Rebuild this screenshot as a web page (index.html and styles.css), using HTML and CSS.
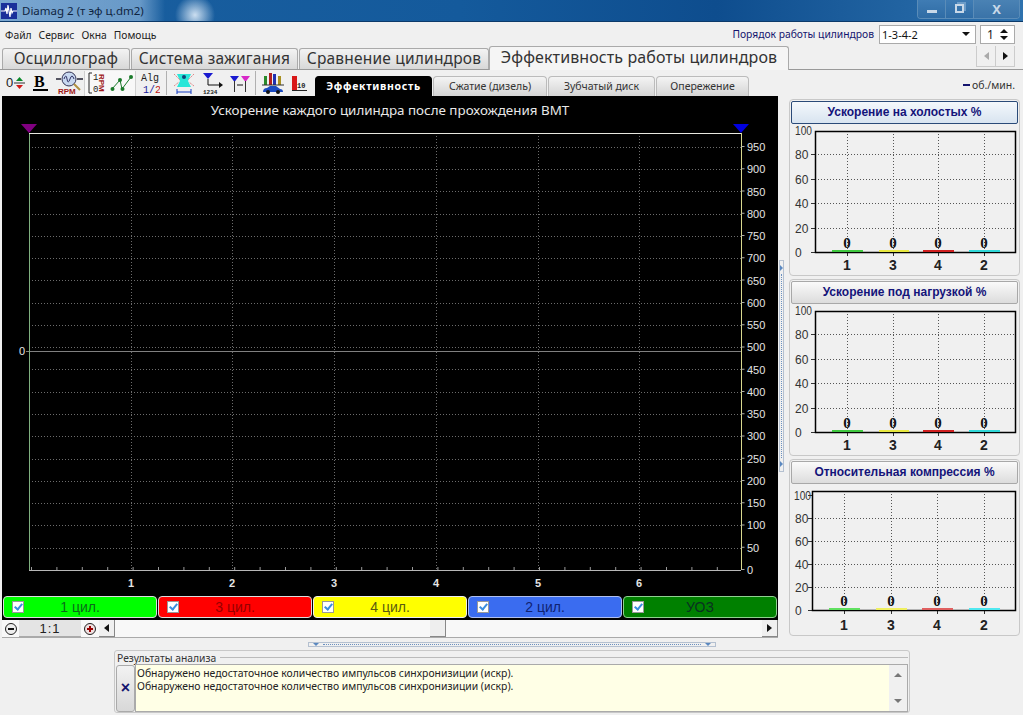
FILE: index.html
```html
<!DOCTYPE html>
<html lang="ru">
<head>
  <meta charset="UTF-8">
  <title>Diamag 2</title>
  <link rel="stylesheet" href="styles.css">
</head>
<body>
  <header class="titlebar">
    <svg class="app-icon" width="16" height="16" viewBox="0 0 16 16">
      <rect width="16" height="16" fill="#1a2f9a"/>
      <path d="M0 8H4L5 5L6 11L7 2L9 14L10 5L11 10L12 8H16" fill="none" stroke="#fff" stroke-width="1.2"/>
    </svg>
    <span class="title-text">Diamag 2 (т эф ц.dm2)</span>
    <div class="win-buttons">
      <div class="win-btn min"><span class="min-bar"></span></div>
      <div class="win-btn max"><span class="max-box"></span></div>
      <div class="win-btn close">X</div>
    </div>
  </header>

  <div class="menubar">
    <nav class="menu">
      <a>Файл</a><a>Сервис</a><a>Окна</a><a>Помощь</a>
    </nav>
    <div class="order">
      <span class="order-label">Порядок работы цилиндров</span>
      <div class="combo"><span>1-3-4-2</span><i class="arrow-down"></i></div>
      <div class="spin"><span>1</span><div class="spin-arrows"><i class="arrow-up"></i><i class="arrow-down"></i></div></div>
    </div>
  </div>

  <div class="tabs">
    <div class="tab tab-1">Осциллограф</div>
    <div class="tab tab-2">Система зажигания</div>
    <div class="tab tab-3">Сравнение цилиндров</div>
    <div class="tab tab-active">Эффективность работы цилиндров</div>
    <div class="tab-scroll">
      <div class="tab-scroll-btn"><i class="arrow-left dim"></i></div>
      <div class="tab-scroll-btn"><i class="arrow-right"></i></div>
    </div>
  </div>

  <div class="toolbar">
    <div class="tool-group">
      <svg width="22" height="22" viewBox="0 0 22 22">
        <text x="2" y="15" class="ico-txt">0</text>
        <path d="M10 11H21" stroke="#333"/>
        <path d="M15.500 5L12 9H19Z" fill="#0a8a2a"/>
        <path d="M15.500 17L12 13H19Z" fill="#d01818"/>
      </svg>
      <svg width="22" height="22" viewBox="0 0 22 22">
        <text x="4" y="15" class="ico-b">B</text>
        <rect x="3" y="17" width="15" height="2" fill="#000"/>
      </svg>
      <svg width="28" height="24" viewBox="0 0 28 24">
        <path d="M0 8H5M21 8H27" stroke="#223" stroke-width="1.500"/>
        <circle cx="13" cy="8" r="7" fill="#c8d8f0" stroke="#335"/>
        <path d="M8 8Q10 2 11 8T14 8T18 8" fill="none" stroke="#336"/>
        <path d="M18 13L24 19" stroke="#b09040" stroke-width="2"/>
        <text x="2" y="23" class="ico-rpm">RPM</text>
      </svg>
    </div>
    <div class="tool-group pressed">
      <svg width="20" height="24" viewBox="0 0 20 24">
        <path d="M5 2H2V22H5" fill="none" stroke="#222"/>
        <text x="6" y="9" class="ico-sm">1</text>
        <text x="6" y="21" class="ico-sm">0</text>
        <text class="ico-rpm" transform="translate(12 3) rotate(90)">RPM</text>
      </svg>
      <svg width="24" height="22" viewBox="0 0 24 22">
        <path d="M2 17L10 8L12 17L21 5" fill="none" stroke="#1a7a2a"/>
        <circle cx="2.500" cy="17" r="2" fill="#1a7a2a"/>
        <circle cx="10" cy="8" r="2" fill="#1a7a2a"/>
        <circle cx="12.500" cy="17" r="2" fill="#1a7a2a"/>
        <circle cx="21" cy="5" r="2" fill="#1a7a2a"/>
      </svg>
    </div>
    <svg class="ml-4" width="20" height="24" viewBox="0 0 20 24">
      <text x="1" y="10" class="ico-alg">Alg</text>
      <text x="3" y="22" class="ico-alg blue">1/<tspan fill="#c01818">2</tspan></text>
    </svg>
    <span class="tool-sep ml-6"></span>
    <svg class="ml-6" width="22" height="24" viewBox="0 0 22 24">
      <path d="M4 3H18L15 10L18 16H4L7 10Z" fill="#29e6d8"/>
      <path d="M1 3L7 9M21 3L15 9M1 15L6 11M21 15L16 11" stroke="#d88" stroke-dasharray="2 1"/>
      <circle cx="11" cy="6" r="2" fill="#147"/>
      <path d="M4 21H18M4 18V23M18 18V23" stroke="#123ac0"/>
    </svg>
    <svg class="ml-7" width="22" height="24" viewBox="0 0 22 24">
      <path d="M1 2H11L6 8Z" fill="#1a1ad0"/>
      <path d="M6 8V14H18" fill="none" stroke="#111"/>
      <path d="M17 11L21 14L17 17Z" fill="#111"/>
      <text x="1" y="23" class="ico-num">1234</text>
    </svg>
    <svg class="ml-5" width="22" height="24" viewBox="0 0 22 24">
      <path d="M1 5H10L5.500 11Z" fill="#1a1ad0"/>
      <path d="M12 5H21L16.500 11Z" fill="#d828c8"/>
      <path d="M5.500 10V21M16.500 10V21" stroke="#333"/>
      <path d="M8 14H14" stroke="#111"/>
    </svg>
    <span class="tool-sep ml-4"></span>
    <svg class="ml-4" width="25" height="24" viewBox="0 0 25 24">
      <rect x="4" y="5" width="3" height="9" fill="#2a8a2a"/>
      <rect x="9" y="2" width="3" height="12" fill="#b02020"/>
      <rect x="13" y="3" width="3" height="11" fill="#2030b0"/>
      <rect x="18" y="5" width="3" height="9" fill="#a89020"/>
      <path d="M2 14H24" stroke="#333"/>
      <path d="M3 21Q3 17 7 17L10 15H16L20 18Q23 18 23 21Z" fill="#1a4ac0"/>
      <circle cx="8" cy="21" r="2" fill="#111"/>
      <circle cx="18" cy="21" r="2" fill="#111"/>
    </svg>
    <svg class="ml-5" width="18" height="22" viewBox="0 0 18 22">
      <rect x="2" y="4" width="5" height="14" fill="#d81818"/>
      <text x="7" y="16" class="ico-ten">10</text>
      <path d="M2 18.500H17" stroke="#222"/>
    </svg>

    <div class="subtabs">
      <div class="subtab subtab-active">Эффективность</div>
      <div class="subtab subtab-2">Сжатие (дизель)</div>
      <div class="subtab subtab-3">Зубчатый диск</div>
      <div class="subtab subtab-4">Опережение</div>
    </div>
    <div class="rpm-legend"><i class="rpm-dash"></i>об./мин.</div>
  </div>

  <main class="workspace">
    <div class="left-col">
      <section class="scope">
        <svg class="scope-chart" width="776" height="498" viewBox="2 96 776 498">
          <text x="390" y="115" class="scope-title">Ускорение каждого цилиндра после прохождения ВМТ</text>
          <path d="M21 124H37L29 133Z" fill="#800080"/>
          <path d="M733 124H749L741 133Z" fill="#0000e0"/>

          <path class="grid" d="M131.500 133V570M232.500 133V570M334.500 133V570M436.500 133V570M538.500 133V570M639.500 133V570"/>
          <path class="grid" d="M29 147.500H741M29 169.500H741M29 191.500H741M29 214.500H741M29 236.500H741M29 258.500H741M29 280.500H741M29 303.500H741M29 325.500H741M29 347.500H741M29 369.500H741M29 392.500H741M29 414.500H741M29 436.500H741M29 459.500H741M29 481.500H741M29 503.500H741M29 525.500H741M29 548.500H741"/>
          <path d="M26 351.500H741" stroke="#808080"/>

          <path d="M29.500 133V570" stroke="#7fb07f"/>
          <path d="M29 133.500H741" stroke="#e8e8e0"/>
          <path d="M29 570.500H741" stroke="#b8b8b8"/>
          <path d="M741.500 133V570" stroke="#d8d890"/>
          <path d="M30 568.500H741" stroke="#999" stroke-width="3" stroke-dasharray="1 24.400" stroke-dashoffset="-1"/>
          <path d="M743 570V133" stroke="#aaa" stroke-width="3" stroke-dasharray="1 21.260"/>

          <text x="22" y="355" class="axis axis-left">0</text>
          <g class="axis axis-right">
            <text x="747" y="151">950</text>
            <text x="747" y="173">900</text>
            <text x="747" y="196">850</text>
            <text x="747" y="218">800</text>
            <text x="747" y="240">750</text>
            <text x="747" y="262">700</text>
            <text x="747" y="285">650</text>
            <text x="747" y="307">600</text>
            <text x="747" y="329">550</text>
            <text x="747" y="351">500</text>
            <text x="747" y="374">450</text>
            <text x="747" y="396">400</text>
            <text x="747" y="418">350</text>
            <text x="747" y="440">300</text>
            <text x="747" y="463">250</text>
            <text x="747" y="485">200</text>
            <text x="747" y="507">150</text>
            <text x="747" y="529">100</text>
            <text x="747" y="552">50</text>
            <text x="747" y="574">0</text>
          </g>
          <g class="axis axis-x">
            <text x="131" y="587">1</text>
            <text x="232" y="587">2</text>
            <text x="334" y="587">3</text>
            <text x="436" y="587">4</text>
            <text x="538" y="587">5</text>
            <text x="639" y="587">6</text>
          </g>
        </svg>
        <div class="legend">
          <div class="cyl cyl-green"><span class="check"></span><span class="cyl-name">1 цил.</span></div>
          <div class="cyl cyl-red"><span class="check"></span><span class="cyl-name">3 цил.</span></div>
          <div class="cyl cyl-yellow"><span class="check"></span><span class="cyl-name">4 цил.</span></div>
          <div class="cyl cyl-blue"><span class="check"></span><span class="cyl-name">2 цил.</span></div>
          <div class="cyl cyl-dark"><span class="check"></span><span class="cyl-name">УОЗ</span></div>
        </div>
      </section>

      <div class="scrollrow">
        <div class="zoom-btn minus"><span></span></div>
        <div class="zoom-value">1:1</div>
        <div class="zoom-btn plus"><span></span></div>
        <div class="scroll-btn"><i class="arrow-left"></i></div>
        <div class="scroll-track"><div class="scroll-thumb"></div></div>
        <div class="scroll-btn"><i class="arrow-right"></i></div>
      </div>

      <div class="hsplit"><i class="tiny-down"></i><span class="dots"></span><i class="tiny-down"></i></div>

      <section class="results">
        <div class="results-head"><span>Результаты анализа</span><span class="results-line"></span></div>
        <div class="results-body">
          <button class="results-close">×</button>
          <div class="results-text">
            <div class="results-lines">
              <p>Обнаружено недостаточное количество импульсов синхронизиции (искр).</p>
              <p>Обнаружено недостаточное количество импульсов синхронизиции (искр).</p>
            </div>
            <div class="results-scroll"><i class="arrow-up grey"></i><i class="arrow-down grey"></i></div>
          </div>
        </div>
      </section>
    </div>

    <div class="vsplit"><i class="tiny-right"></i><span class="vdots"></span><i class="tiny-right"></i></div>

    <aside class="right-col">
      <section class="panel">
        <div class="panel-head head-focus">Ускорение на холостых %</div>
        <svg class="mini" width="231" height="153" viewBox="789 122 231 153">
          <path class="mini-grid" d="M847.500 131V252M893.500 131V252M938.500 131V252M984.500 131V252M815 154.500H1016M815 179.500H1016M815 203.500H1016M815 228.500H1016"/>
          <path class="mini-ticks" d="M811 154.500H815M811 179.500H815M811 203.500H815M811 228.500H815M811 252.500H815M847.500 252V256M893.500 252V256M938.500 252V256M984.500 252V256"/>
          <rect x="815.500" y="131.500" width="200" height="121" class="mini-frame"/>
          <g class="mini-y">
            <text x="795" y="135" textLength="17" lengthAdjust="spacingAndGlyphs">100</text><text x="795" y="159">80</text><text x="795" y="184">60</text>
            <text x="795" y="208">40</text><text x="795" y="233">20</text><text x="795" y="257">0</text>
          </g>
          <path d="M832 251H863" stroke="#40c840" stroke-width="2"/>
          <path d="M879 251H909" stroke="#e8e840" stroke-width="2"/>
          <path d="M923 251H954" stroke="#d02020" stroke-width="2"/>
          <path d="M969 251H1000" stroke="#30d8d8" stroke-width="2"/>
          <g class="mini-val">
            <text x="847" y="248">0</text><text x="893" y="248">0</text><text x="938" y="248">0</text><text x="984" y="248">0</text>
          </g>
          <g class="mini-x">
            <text x="847" y="270">1</text><text x="893" y="270">3</text><text x="938" y="270">4</text><text x="984" y="270">2</text>
          </g>
        </svg>
      </section>
      <section class="panel">
        <div class="panel-head">Ускорение под нагрузкой %</div>
        <svg class="mini" width="231" height="153" viewBox="789 122 231 153">
          <path class="mini-grid" d="M847.500 131V252M893.500 131V252M938.500 131V252M984.500 131V252M815 154.500H1016M815 179.500H1016M815 203.500H1016M815 228.500H1016"/>
          <path class="mini-ticks" d="M811 154.500H815M811 179.500H815M811 203.500H815M811 228.500H815M811 252.500H815M847.500 252V256M893.500 252V256M938.500 252V256M984.500 252V256"/>
          <rect x="815.500" y="131.500" width="200" height="121" class="mini-frame"/>
          <g class="mini-y">
            <text x="795" y="135" textLength="17" lengthAdjust="spacingAndGlyphs">100</text><text x="795" y="159">80</text><text x="795" y="184">60</text>
            <text x="795" y="208">40</text><text x="795" y="233">20</text><text x="795" y="257">0</text>
          </g>
          <path d="M832 251H863" stroke="#40c840" stroke-width="2"/>
          <path d="M879 251H909" stroke="#e8e840" stroke-width="2"/>
          <path d="M923 251H954" stroke="#d02020" stroke-width="2"/>
          <path d="M969 251H1000" stroke="#30d8d8" stroke-width="2"/>
          <g class="mini-val">
            <text x="847" y="248">0</text><text x="893" y="248">0</text><text x="938" y="248">0</text><text x="984" y="248">0</text>
          </g>
          <g class="mini-x">
            <text x="847" y="270">1</text><text x="893" y="270">3</text><text x="938" y="270">4</text><text x="984" y="270">2</text>
          </g>
        </svg>
      </section>
      <section class="panel">
        <div class="panel-head">Относительная компрессия %</div>
        <svg class="mini" width="231" height="153" viewBox="789 482 231 153">
          <path class="mini-grid" d="M844.500 491V610M891.500 491V610M937.500 491V610M984.500 491V610M812 518.500H1016M812 541.500H1016M812 564.500H1016M812 587.500H1016"/>
          <path class="mini-ticks" d="M808 495.500H812M808 518.500H812M808 541.500H812M808 564.500H812M808 587.500H812M808 610.500H812M844.500 610V614M891.500 610V614M937.500 610V614M984.500 610V614"/>
          <rect x="812.500" y="491.500" width="203" height="119" class="mini-frame"/>
          <g class="mini-y">
            <text x="794" y="500" textLength="17" lengthAdjust="spacingAndGlyphs">100</text><text x="795" y="523">80</text><text x="795" y="546">60</text>
            <text x="795" y="569">40</text><text x="795" y="592">20</text><text x="795" y="615">0</text>
          </g>
          <path d="M829 609H860" stroke="#60e060" stroke-width="2"/>
          <path d="M876 609H907" stroke="#f0f060" stroke-width="2"/>
          <path d="M922 609H953" stroke="#e06060" stroke-width="2"/>
          <path d="M969 609H1000" stroke="#50e8f0" stroke-width="2"/>
          <g class="mini-val">
            <text x="844" y="606">0</text><text x="891" y="606">0</text><text x="937" y="606">0</text><text x="984" y="606">0</text>
          </g>
          <g class="mini-x">
            <text x="844" y="630">1</text><text x="891" y="630">3</text><text x="937" y="630">4</text><text x="984" y="630">2</text>
          </g>
        </svg>
      </section>
    </aside>
  </main>
</body>
</html>
```

FILE: styles.css
```css
/* General */
html, body {
  margin: 0;
  height: 715px;
  overflow: hidden;
}

body {
  width: 1023px;
  background: #f0f0f0;
  color: #222;
  font-family: "Noto Sans", "Liberation Sans", sans-serif;
  font-size: 11px;
}

p {
  margin: 0;
}

/* Little arrows */
.arrow-down, .arrow-up, .arrow-left, .arrow-right {
  display: block;
  width: 0;
  height: 0;
  border-style: solid;
  border-color: transparent;
}

.arrow-down {
  border-width: 4px 4px 0;
  border-top-color: #111;
}

.arrow-up {
  border-width: 0 4px 4px;
  border-bottom-color: #111;
}

.arrow-left {
  border-width: 4px 5px 4px 0;
  border-right-color: #111;
}

.arrow-right {
  border-width: 4px 0 4px 5px;
  border-left-color: #111;
}

.arrow-left.dim {
  border-right-color: #aaa;
}

.arrow-up.grey {
  border-bottom-color: #777;
}

.arrow-down.grey {
  border-top-color: #777;
}

/* Title bar */
.titlebar {
  height: 21px;
  display: flex;
  align-items: center;
  padding-left: 1px;
  gap: 5px;
  background:
    radial-gradient(circle 20px at 195px 15px, rgba(235, 245, 255, 0.85), rgba(235, 245, 255, 0) 100%),
    linear-gradient(90deg, rgba(200, 225, 250, 0.55) 0, rgba(200, 225, 250, 0.45) 140px, rgba(200, 225, 250, 0) 165px),
    linear-gradient(90deg, #1a5f9f 0, #145a9c 45%, #0e4d8e 70%, #2e72ae 100%);
  border-bottom: 1px solid #0c3a6a;
}

.app-icon {
  flex: none;
}

.title-text {
  font-size: 11.5px;
  color: #10253f;
}

.win-buttons {
  margin-left: auto;
  margin-right: 3px;
  margin-bottom: 3px;
  display: flex;
  height: 18px;
  border: 1px solid #5a8cb8;
  border-top: none;
  border-radius: 0 0 4px 4px;
  overflow: hidden;
}

.win-btn {
  height: 18px;
  display: flex;
  align-items: center;
  justify-content: center;
  background: linear-gradient(#3f7cb4, #2f6ca5);
  color: #c8d8e8;
  font-weight: 700;
  font-size: 13px;
}

.win-btn.min, .win-btn.max {
  width: 27px;
  border-right: 1px solid #5a8cb8;
}

.win-btn.close {
  width: 45px;
  background: linear-gradient(#4a82b4, #3a73a8);
}

.min-bar {
  width: 10px;
  height: 3px;
  margin-top: 5px;
  background: #c8d8e8;
}

.max-box {
  width: 5px;
  height: 5px;
  border: 2px solid #c8d8e8;
  box-shadow: 2px -2px 0 0 #6c9cc8;
}

/* Menu bar */
.menubar {
  height: 24px;
  display: flex;
  align-items: center;
  justify-content: space-between;
  padding-right: 8px;
}

.menu {
  display: flex;
  gap: 7px;
  padding-left: 5px;
  font-size: 10.3px;
  margin-top: 1px;
}

.order {
  display: flex;
  align-items: center;
}

.order-label {
  color: #14146e;
  margin-right: 5px;
  font-size: 10.3px;
}

.combo {
  width: 97px;
  height: 19px;
  box-sizing: border-box;
  background: #fff;
  border: 1px solid #aaa;
  display: flex;
  align-items: center;
  justify-content: space-between;
  padding: 0 5px 0 2px;
  margin-right: 4px;
  color: #111;
}

.spin {
  width: 35px;
  height: 19px;
  box-sizing: border-box;
  background: #fff;
  border: 1px solid #aaa;
  display: flex;
  align-items: center;
  justify-content: space-between;
  padding: 0 6px;
  font-size: 12px;
}

.spin-arrows {
  display: flex;
  flex-direction: column;
  gap: 3px;
}

/* Main tabs */
.tabs {
  height: 23px;
  display: flex;
  align-items: flex-end;
  padding-left: 2px;
  border-bottom: 1px solid #999;
  position: relative;
}

.tab {
  box-sizing: border-box;
  height: 21px;
  display: flex;
  align-items: center;
  justify-content: center;
  padding-bottom: 2px;
  border: 1px solid #aaa;
  border-bottom: none;
  border-radius: 3px 3px 0 0;
  margin-right: 1px;
  background: linear-gradient(#f3f3f3, #d8d8d8);
  font-size: 15.5px;
  letter-spacing: 0.2px;
  color: #333;
}

.tab-1 {
  width: 128px;
}

.tab-2 {
  width: 167px;
}

.tab-3 {
  width: 190px;
}

.tab-active {
  width: 300px;
  height: 24px;
  margin: 0 0 -1px -1px;
  padding-bottom: 3px;
  background: #f5f5f5;
  font-size: 16px;
  letter-spacing: 0.1px;
}

.tab-scroll {
  position: absolute;
  right: 8px;
  bottom: 2px;
  display: flex;
  height: 20px;
  border: 1px solid #ccc;
  border-top: none;
}

.tab-scroll-btn {
  width: 18px;
  display: flex;
  align-items: center;
  justify-content: center;
  border-left: 1px solid #ccc;
}

.tab-scroll-btn:first-child {
  border-left: none;
}

/* Toolbar */
.toolbar {
  height: 26px;
  display: flex;
  align-items: center;
  padding-left: 4px;
  position: relative;
}

.toolbar svg {
  flex: none;
}

.ml-4 {
  margin-left: 4px;
}

.ml-5 {
  margin-left: 5px;
}

.ml-6 {
  margin-left: 6px;
}

.ml-7 {
  margin-left: 7px;
}

.tool-group {
  display: flex;
  align-items: center;
  gap: 4px;
  height: 25px;
}

.tool-group.pressed {
  gap: 3px;
  padding: 0 1px 0 2px;
  background: #f8f8f8;
  border-left: 1px solid #d0d0d0;
  border-right: 1px solid #d0d0d0;
}

.tool-sep {
  width: 1px;
  height: 24px;
  flex: none;
  background: #b0b0b0;
}

.ico-txt {
  font: 13px "Liberation Sans", sans-serif;
  fill: #222;
}

.ico-b {
  font: 700 16px "Liberation Serif", serif;
  fill: #000;
}

.ico-rpm {
  font: 700 8px "Liberation Sans", sans-serif;
  fill: #a01818;
}

.ico-sm {
  font: 9px "Liberation Mono", monospace;
  fill: #222;
}

.ico-alg {
  font: 10px "Liberation Mono", monospace;
  fill: #222;
}

.ico-alg.blue {
  fill: #1a1a9a;
}

.ico-num {
  font: 700 6px "Liberation Mono", monospace;
  fill: #222;
}

.ico-ten {
  font: 700 7px "Liberation Mono", monospace;
  fill: #222;
}

.subtabs {
  position: absolute;
  left: 315px;
  bottom: 0;
  display: flex;
  align-items: flex-end;
  height: 21px;
}

.subtab {
  box-sizing: border-box;
  height: 20px;
  display: flex;
  align-items: center;
  justify-content: center;
  padding-bottom: 2px;
  border: 1px solid #bbb;
  border-bottom: none;
  border-radius: 4px 4px 0 0;
  margin-right: 1px;
  background: linear-gradient(#f4f4f4, #d4d4d4);
  font-size: 10.5px;
  color: #333;
}

.subtab-active {
  width: 117px;
  background: #000;
  border-color: #000;
  color: #fff;
  font-weight: 700;
  letter-spacing: 0.7px;
}

.subtab-2 {
  width: 114px;
}

.subtab-3 {
  width: 107px;
}

.subtab-4 {
  width: 93px;
}

.rpm-legend {
  position: absolute;
  right: 8px;
  bottom: 4px;
  display: flex;
  align-items: center;
  gap: 2px;
  font-size: 10.5px;
  color: #333;
}

.rpm-dash {
  width: 7px;
  height: 2px;
  background: #14146e;
}

/* Layout below the toolbar */
.workspace {
  height: 620px;
  display: flex;
}

.left-col {
  width: 776px;
  margin-left: 2px;
  display: flex;
  flex-direction: column;
}

/* Oscilloscope */
.scope {
  background: #000;
  height: 524px;
  display: flex;
  flex-direction: column;
}

.scope-chart {
  display: block;
  flex: none;
}

.scope-title {
  font: 13.4px "Noto Sans", sans-serif;
  fill: #e8e8e8;
  text-anchor: middle;
}

.grid {
  fill: none;
  stroke: #6c6c6c;
  stroke-dasharray: 1 2;
}

.axis {
  font: 11px "Liberation Sans", sans-serif;
  fill: #e4e4e4;
}

.axis-left {
  text-anchor: middle;
}

.axis-x {
  font-weight: 700;
  text-anchor: middle;
}

.legend {
  height: 22px;
  margin-top: 2px;
  padding: 0 1px;
  display: grid;
  grid-template-columns: repeat(5, 1fr);
  gap: 1px;
}

.cyl {
  border-radius: 4px;
  border: 1px solid #ddd;
  display: flex;
  align-items: center;
  padding-left: 8px;
  font: 14px "Liberation Sans", sans-serif;
}

.cyl-name {
  flex: 1;
  text-align: center;
  padding-right: 20px;
}

.check {
  width: 10px;
  height: 10px;
  background: #fff;
  border: 1px solid #999;
  position: relative;
}

.check::after {
  content: "";
  position: absolute;
  left: 3px;
  top: 0;
  width: 3px;
  height: 6px;
  border: solid #3a8ee0;
  border-width: 0 2px 2px 0;
  transform: rotate(40deg);
}

.cyl-green {
  background: #00ff00;
  color: #0a6a1a;
}

.cyl-red {
  background: #ff0000;
  color: #960000;
}

.cyl-yellow {
  background: #ffff00;
  color: #5a5a10;
  border-color: #eee;
}

.cyl-blue {
  background: #3a6cf0;
  color: #102270;
  border-color: #b0c0f0;
}

.cyl-dark {
  background: #008000;
  color: #0a3020;
  border-color: #90d090;
}

/* Zoom and scroll row */
.scrollrow {
  height: 17px;
  display: flex;
  align-items: stretch;
  border-bottom: 1px solid #aaa;
  background: #f8f8f8;
}

.zoom-btn {
  width: 16px;
  margin-left: 1px;
  display: flex;
  align-items: center;
  justify-content: center;
}

.zoom-btn span {
  width: 10px;
  height: 10px;
  border: 1px solid #222;
  border-radius: 50%;
  position: relative;
  background: #eee;
}

.zoom-btn span::before {
  content: "";
  position: absolute;
  left: 2px;
  top: 4px;
  width: 6px;
  height: 2px;
  background: #111;
}

.plus span {
  background: #f0e0e0;
}

.plus span::before {
  background: #900;
}

.plus span::after {
  content: "";
  position: absolute;
  left: 4px;
  top: 2px;
  width: 2px;
  height: 6px;
  background: #900;
}

.zoom-value {
  width: 62px;
  background: #e4e4e4;
  border-bottom: 1px solid #aaa;
  text-align: center;
  font: 13px/17px "Liberation Sans", sans-serif;
  letter-spacing: 1px;
}

.scroll-btn {
  width: 15px;
  margin-left: 1px;
  background: #f0f0f0;
  border-right: 1px solid #888;
  border-bottom: 1px solid #888;
  display: flex;
  align-items: center;
  justify-content: center;
}

.scroll-track {
  flex: 1;
  padding-left: 315px;
}

.scroll-thumb {
  width: 15px;
  height: 16px;
  background: #eee;
  border-right: 1px solid #888;
  border-bottom: 1px solid #888;
}

/* Horizontal splitter */
.hsplit {
  width: 408px;
  height: 5px;
  margin: 4px 0 3px 306px;
  box-sizing: border-box;
  border: 1px solid #b4c0d0;
  display: flex;
  align-items: center;
  gap: 4px;
  padding: 0 4px;
}

.tiny-down {
  width: 0;
  height: 0;
  border: solid transparent;
  border-width: 3px 3px 0;
  border-top-color: #5a88c0;
}

.dots {
  flex: 1;
  border-top: 1px dotted #6a90c0;
}

/* Analysis results */
.results {
  width: 796px;
  height: 63px;
  margin-left: 112px;
  box-sizing: border-box;
  border: 1px solid #c8c8c8;
  border-radius: 3px;
  padding: 0 1px;
  flex: none;
}

.results-head {
  height: 13px;
  display: flex;
  align-items: center;
  gap: 4px;
  padding-left: 1px;
  color: #333;
  font-size: 10.3px;
}

.results-line {
  flex: 1;
  border-top: 1px solid #bbb;
}

.results-body {
  height: 48px;
  display: flex;
}

.results-close {
  width: 19px;
  margin: 1px 0 0;
  padding: 0 0 2px;
  border: 1px solid #aaa;
  border-radius: 3px;
  background: linear-gradient(#f2f2f2, #d8d8d8);
  color: #14146e;
  font: 700 16px "Liberation Sans", sans-serif;
}

.results-text {
  flex: 1;
  display: flex;
  border: 1px solid #aaa;
  background: #ffffe6;
}

.results-lines {
  flex: 1;
  padding: 2px 1px;
  font-size: 10.4px;
  line-height: 13px;
  color: #222;
}

.results-scroll {
  width: 18px;
  background: #f0f0f0;
  display: flex;
  flex-direction: column;
  align-items: center;
  justify-content: space-between;
  padding: 8px 0;
  box-sizing: border-box;
}

/* Vertical splitter */
.vsplit {
  width: 5px;
  height: 212px;
  margin: 164px 0 0 1px;
  border: 1px solid #b4c0d0;
  display: flex;
  flex-direction: column;
  align-items: center;
  gap: 3px;
  padding: 4px 0;
  box-sizing: border-box;
}

.tiny-right {
  width: 0;
  height: 0;
  border: solid transparent;
  border-width: 3px 0 3px 3px;
  border-left-color: #5a88c0;
}

.vdots {
  flex: 1;
  border-left: 1px dotted #6a90c0;
}

/* Right hand panels */
.right-col {
  width: 231px;
  margin: 3px 0 0 5px;
  display: flex;
  flex-direction: column;
  gap: 3px;
}

.panel {
  box-sizing: border-box;
  height: 177px;
  border: 1px solid #c8c8c8;
  border-radius: 4px;
  padding: 1px;
  position: relative;
}

.panel-head {
  height: 23px;
  box-sizing: border-box;
  border: 1px solid #a8a8a8;
  border-radius: 2px;
  background: linear-gradient(#fafafa, #dcdcdc);
  color: #14147a;
  font: 700 12px/21px "Liberation Sans", sans-serif;
  text-align: center;
}

.head-focus {
  border-color: #2a4a78;
  background: linear-gradient(#f4f8fc, #d8e4f0);
}

.mini {
  position: absolute;
  left: -1px;
  top: 22px;
}

.mini-grid {
  fill: none;
  stroke: #555;
  stroke-dasharray: 1 2;
}

.mini-ticks {
  fill: none;
  stroke: #333;
}

.mini-frame {
  fill: none;
  stroke: #000;
  stroke-width: 1.500;
}

.mini-y {
  font: 12px "Liberation Sans", sans-serif;
  fill: #333;
}

.mini-val {
  font: 700 15px "Liberation Serif", serif;
  fill: #111;
  text-anchor: middle;
}

.mini-x {
  font: 700 14px "Liberation Sans", sans-serif;
  fill: #222;
  text-anchor: middle;
}
```
